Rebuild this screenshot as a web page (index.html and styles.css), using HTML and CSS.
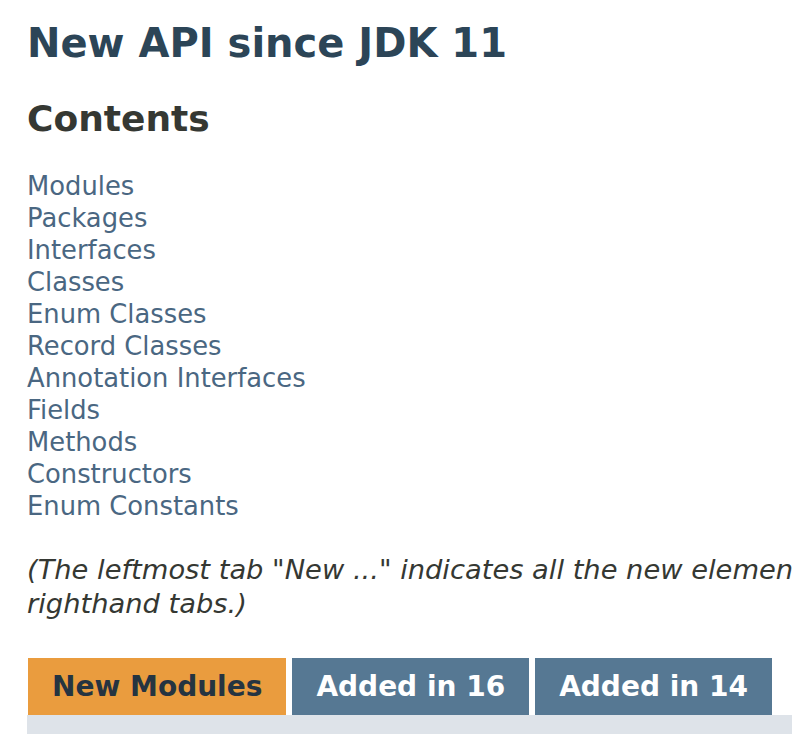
FILE: index.html
```html
<!DOCTYPE html>
<html>
<head>
<meta charset="utf-8">
<link rel="stylesheet" href="styles.css">
</head>
<body>
<main class="page">
  <h1 class="title">New API since JDK 11</h1>
  <h2 class="contents-title">Contents</h2>
  <ul class="contents-list">
    <li><a href="#module">Modules</a></li>
    <li><a href="#package">Packages</a></li>
    <li><a href="#interface">Interfaces</a></li>
    <li><a href="#class">Classes</a></li>
    <li><a href="#enum-class">Enum Classes</a></li>
    <li><a href="#record-class">Record Classes</a></li>
    <li><a href="#annotation-interface">Annotation Interfaces</a></li>
    <li><a href="#field">Fields</a></li>
    <li><a href="#method">Methods</a></li>
    <li><a href="#constructor">Constructors</a></li>
    <li><a href="#enum-constant">Enum Constants</a></li>
  </ul>
  <p class="note">(The leftmost tab "New ..." indicates all the new elements, regardless of the releases in which they were added. Each of the other tabs shows the elements added in a specific release. Any element shown under the leftmost tab is also shown under one of the<br>righthand tabs.)</p>
  <div class="tabs">
    <button class="tab active">New Modules</button>
    <button class="tab">Added in 16</button>
    <button class="tab">Added in 14</button>
  </div>
  <div class="tab-strip"></div>
</main>
</body>
</html>
```

FILE: styles.css
```css
html, body {
  margin: 0;
  padding: 0;
  background: #ffffff;
  overflow: hidden;
}
body {
  font-family: "DejaVu Sans", "Liberation Sans", sans-serif;
  color: #353833;
}
.page {
  padding: 0 0 0 27px;
  width: 2600px;
}
.title {
  margin: 0;
  padding-top: 17px;
  font-size: 40px;
  line-height: 52px;
  font-weight: bold;
  color: #2c4557;
}
.contents-title {
  margin: 0;
  padding-top: 28px;
  font-size: 36px;
  line-height: 44px;
  font-weight: bold;
  color: #353833;
}
.contents-list {
  list-style: none;
  margin: 0;
  padding: 29px 0 0 0;
  font-size: 25.8px;
  line-height: 32px;
}
.contents-list a {
  color: #4a6782;
  text-decoration: none;
}
.note {
  margin: 0;
  padding-top: 31px;
  font-size: 27.3px;
  line-height: 34px;
  font-style: italic;
  color: #353833;
  white-space: nowrap;
}
.tabs {
  display: flex;
  gap: 6px;
  margin-top: 37px;
  padding-left: 1px;
}
.tab {
  border: none;
  margin: 0;
  font-family: "DejaVu Sans", sans-serif;
  font-weight: bold;
  font-size: 28px;
  height: 57px;
  padding: 0 24px 1px 24px;
  color: #ffffff;
  background: #567893;
}
.tab.active {
  background: #ea9c3e;
  color: #253441;
}
.tab-strip {
  height: 30px;
  background: #dee3e9;
}
```
